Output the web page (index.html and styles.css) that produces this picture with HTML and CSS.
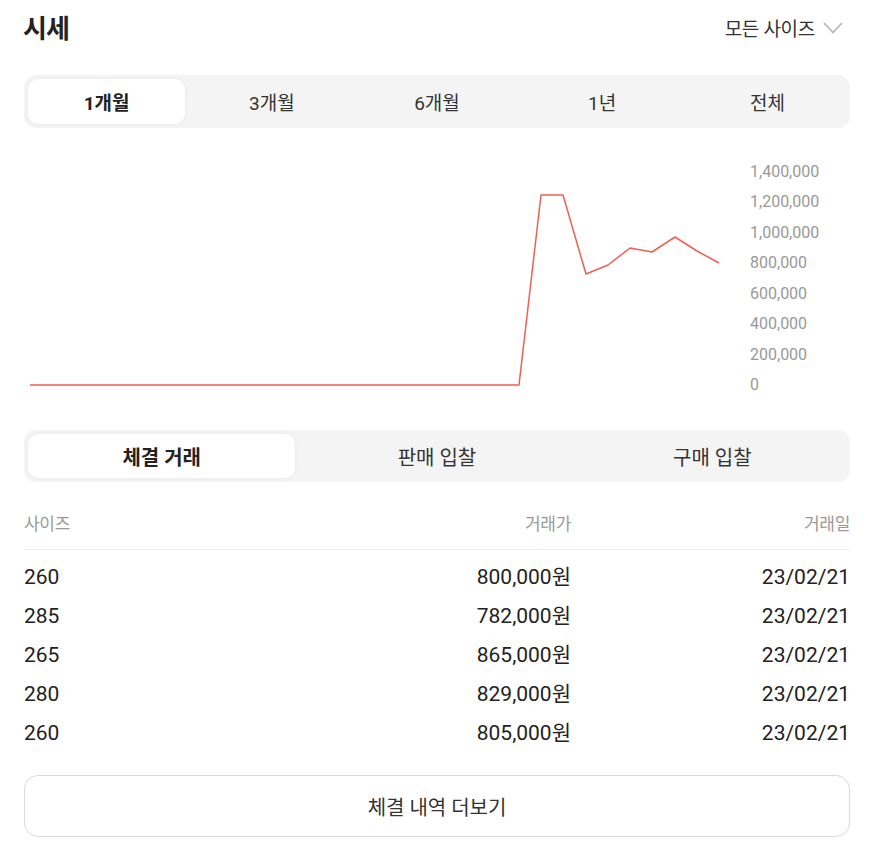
FILE: index.html
```html
<!DOCTYPE html>
<html>

<head>
    <meta charset="UTF-8">
    <meta name="viewport" content="width=device-width, initial-scale=1.0">
    <title>시세</title>
    <link rel="stylesheet" href="styles.css">
</head>

<body>
    <div class="price-box">
        <div class="header">
            <h2 class="title">시세</h2>
            <div class="size-select">
                모든 사이즈
                <svg class="chevron" width="20" height="12" viewBox="0 0 20 12">
                    <polyline points="1,1 10,10.5 19,1" fill="none" stroke="#b5b5b5" stroke-width="1.6" />
                </svg>
            </div>
        </div>

        <div class="tabs period-tabs">
            <div class="tab active">1개월</div>
            <div class="tab">3개월</div>
            <div class="tab">6개월</div>
            <div class="tab">1년</div>
            <div class="tab">전체</div>
        </div>

        <div class="chart">
            <svg class="chart-graph" width="726" height="302" viewBox="0 0 726 302">
                <polyline points="6,257 495,257 517,67 539,67 562,146 584,137 606,120 628,124 651,109 673,123 695,135"
                    fill="none" stroke="#ee5f52" stroke-width="1.5" stroke-linejoin="round" />
            </svg>
            <div class="chart-axis">
                <span>1,400,000</span>
                <span>1,200,000</span>
                <span>1,000,000</span>
                <span>800,000</span>
                <span>600,000</span>
                <span>400,000</span>
                <span>200,000</span>
                <span>0</span>
            </div>
        </div>

        <div class="tabs trade-tabs">
            <div class="tab active">체결 거래</div>
            <div class="tab">판매 입찰</div>
            <div class="tab">구매 입찰</div>
        </div>

        <div class="table-head">
            <span>사이즈</span>
            <span class="right">거래가</span>
            <span class="right">거래일</span>
        </div>
        <div class="table-body">
            <div class="row"><span>260</span><span class="right">800,000원</span><span class="right">23/02/21</span></div>
            <div class="row"><span>285</span><span class="right">782,000원</span><span class="right">23/02/21</span></div>
            <div class="row"><span>265</span><span class="right">865,000원</span><span class="right">23/02/21</span></div>
            <div class="row"><span>280</span><span class="right">829,000원</span><span class="right">23/02/21</span></div>
            <div class="row"><span>260</span><span class="right">805,000원</span><span class="right">23/02/21</span></div>
        </div>

        <button class="more-btn">체결 내역 더보기</button>
    </div>
</body>

</html>
```

FILE: styles.css
```css
body {
    font-family: Roboto, "Noto Sans CJK KR", sans-serif;
    margin: 0;
    background-color: #ffffff;
    color: #222222;
}

.price-box {
    width: 826px;
    margin-left: 24px;
}

.header {
    display: flex;
    justify-content: space-between;
    align-items: center;
    height: 52px;
}

.title {
    margin: 0 0 0 -1px;
    font-size: 26px;
    font-weight: bold;
    letter-spacing: -1px;
    color: #222222;
}

.size-select {
    display: flex;
    align-items: center;
    gap: 8px;
    font-size: 19px;
    letter-spacing: -0.3px;
    color: #333333;
    margin-right: 7px;
    margin-top: 2px;
}

.chevron {
    margin-top: 1px;
}

.tabs {
    display: grid;
    background-color: #f4f4f4;
    border-radius: 12px;
}

.period-tabs {
    margin-top: 23px;
    height: 53px;
    grid-template-columns: repeat(5, 1fr);
}

.trade-tabs {
    height: 52px;
    grid-template-columns: repeat(3, 1fr);
}

.tab {
    display: flex;
    justify-content: center;
    align-items: center;
    margin: 4px;
    font-size: 19px;
    color: #333333;
}

.trade-tabs .tab {
    font-size: 20px;
}

.tab.active {
    background-color: #ffffff;
    border-radius: 10px;
    box-shadow: 0 0 4px rgba(0, 0, 0, 0.06);
    font-weight: bold;
    color: #222222;
}

.chart {
    display: flex;
    height: 302px;
}

.chart-graph {
    display: block;
}

.chart-axis {
    display: flex;
    flex-direction: column;
    padding-top: 29px;
    font-size: 16px;
    line-height: 30.43px;
    color: #999999;
}

.table-head {
    display: grid;
    grid-template-columns: 200px 347px 1fr;
    margin-top: 28px;
    line-height: 28px;
    padding-bottom: 11px;
    border-bottom: 1px solid #ebebeb;
    font-size: 17px;
    letter-spacing: -0.3px;
    color: #999999;
}

.table-body {
    padding-top: 8px;
}

.row {
    display: grid;
    grid-template-columns: 200px 347px 1fr;
    height: 39px;
    line-height: 39px;
    align-items: baseline;
    font-size: 21px;
    color: #222222;
}

.right {
    text-align: right;
}

.more-btn {
    display: block;
    width: 100%;
    height: 62px;
    margin-top: 22px;
    background-color: #ffffff;
    border: 1px solid #d9d9d9;
    border-radius: 14px;
    font-family: Roboto, "Noto Sans CJK KR", sans-serif;
    font-size: 20px;
    color: #333333;
}
```
